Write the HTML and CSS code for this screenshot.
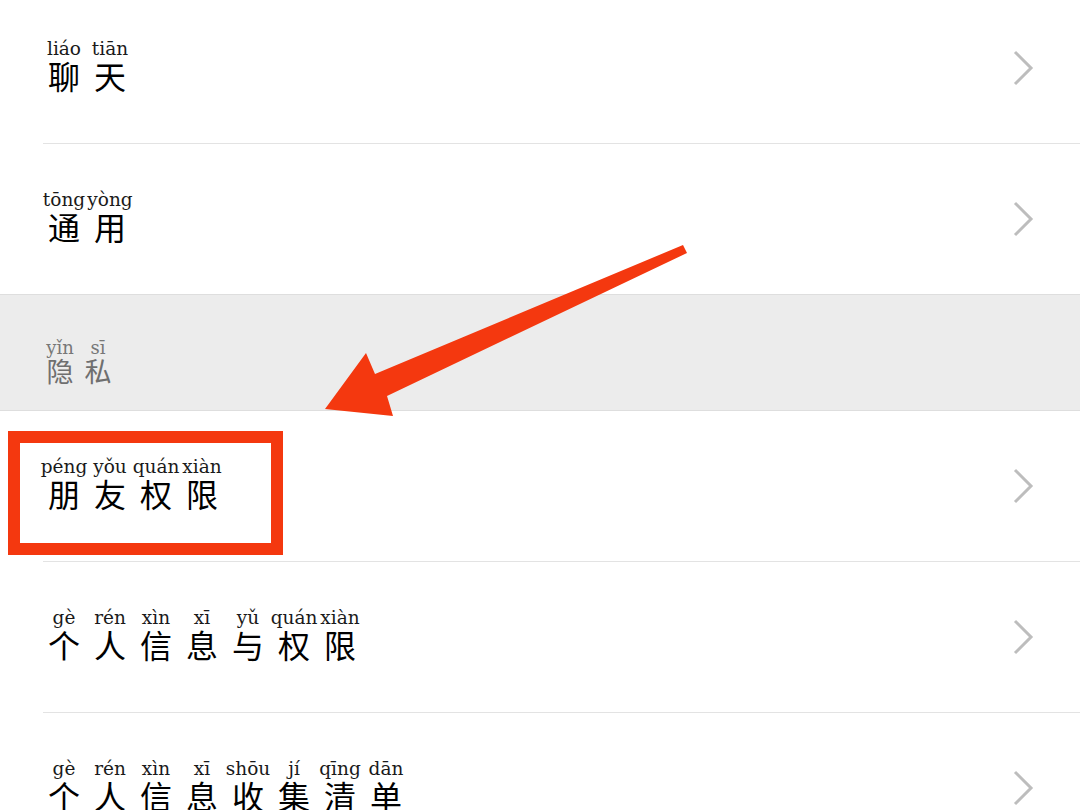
FILE: index.html
```html
<!DOCTYPE html>
<html lang="zh-CN">
<head>
<meta charset="utf-8">
<title>设置</title>
<link rel="stylesheet" href="styles.css">
</head>
<body>
<div class="page">
  <div class="list">
    <div class="row first">
      <div class="label">
        <span class="u"><span class="py">liáo</span><span class="hz">聊</span></span><span class="u"><span class="py">tiān</span><span class="hz">天</span></span>
      </div>
      <svg class="chev" viewBox="0 0 22 36" width="22" height="36"><polyline points="3,2 19,18 3,34"/></svg>
    </div>
    <div class="row before-header">
      <div class="label">
        <span class="u"><span class="py">tōng</span><span class="hz">通</span></span><span class="u"><span class="py">yòng</span><span class="hz">用</span></span>
      </div>
      <svg class="chev" viewBox="0 0 22 36" width="22" height="36"><polyline points="3,2 19,18 3,34"/></svg>
    </div>
    <div class="header">
      <div class="label">
        <span class="u"><span class="py">yǐn</span><span class="hz">隐</span></span><span class="u"><span class="py">sī</span><span class="hz">私</span></span>
      </div>
    </div>
    <div class="row">
      <div class="label">
        <span class="u"><span class="py">péng</span><span class="hz">朋</span></span><span class="u"><span class="py">yǒu</span><span class="hz">友</span></span><span class="u"><span class="py">quán</span><span class="hz">权</span></span><span class="u"><span class="py">xiàn</span><span class="hz">限</span></span>
      </div>
      <svg class="chev" viewBox="0 0 22 36" width="22" height="36"><polyline points="3,2 19,18 3,34"/></svg>
    </div>
    <div class="row">
      <div class="label">
        <span class="u"><span class="py">gè</span><span class="hz">个</span></span><span class="u"><span class="py">rén</span><span class="hz">人</span></span><span class="u"><span class="py">xìn</span><span class="hz">信</span></span><span class="u"><span class="py">xī</span><span class="hz">息</span></span><span class="u"><span class="py">yǔ</span><span class="hz">与</span></span><span class="u"><span class="py">quán</span><span class="hz">权</span></span><span class="u"><span class="py">xiàn</span><span class="hz">限</span></span>
      </div>
      <svg class="chev" viewBox="0 0 22 36" width="22" height="36"><polyline points="3,2 19,18 3,34"/></svg>
    </div>
    <div class="row">
      <div class="label">
        <span class="u"><span class="py">gè</span><span class="hz">个</span></span><span class="u"><span class="py">rén</span><span class="hz">人</span></span><span class="u"><span class="py">xìn</span><span class="hz">信</span></span><span class="u"><span class="py">xī</span><span class="hz">息</span></span><span class="u"><span class="py">shōu</span><span class="hz">收</span></span><span class="u"><span class="py">jí</span><span class="hz">集</span></span><span class="u"><span class="py">qīng</span><span class="hz">清</span></span><span class="u"><span class="py">dān</span><span class="hz">单</span></span>
      </div>
      <svg class="chev" viewBox="0 0 22 36" width="22" height="36"><polyline points="3,2 19,18 3,34"/></svg>
    </div>
  </div>

  <div class="highlight-box"></div>
  <svg class="arrow" viewBox="0 0 1080 810" width="1080" height="810">
    <polygon points="325,409 366,353 375,374 683,245 687,253 387,396 393,416"/>
  </svg>
</div>
</body>
</html>
```

FILE: styles.css
```css
html, body {
  margin: 0;
  padding: 0;
  background: #ffffff;
}
body {
  width: 1080px;
  height: 810px;
  overflow: hidden;
  font-family: "Noto Sans CJK SC", "Noto Sans", sans-serif;
}
.page {
  position: relative;
  width: 1080px;
  height: 810px;
  overflow: hidden;
}
.list {
  display: flex;
  flex-direction: column;
  margin-top: -7px;
}
.row {
  display: flex;
  align-items: center;
  justify-content: space-between;
  height: 150px;
  margin-left: 43px;
  padding-right: 46px;
  border-bottom: 1px solid #e3e3e3;
  flex-shrink: 0;
}
.row.before-header {
  border-bottom: none;
}
.row .label {
  padding-bottom: 6px;
}
.label {
  display: flex;
  margin-left: -2px;
}
.u {
  display: flex;
  flex-direction: column;
  align-items: center;
  width: 46px;
}
.py {
  font-family: "DejaVu Serif", "Liberation Serif", serif;
  font-size: 18.5px;
  line-height: 20px;
  color: #1a1a1a;
  white-space: nowrap;
}
.hz {
  font-family: "Noto Sans CJK SC", sans-serif;
  font-size: 32px;
  line-height: 32px;
  font-weight: 400;
  color: #000000;
}
.chev {
  display: block;
  fill: none;
  stroke: #bdbdbd;
  stroke-width: 3;
}
.header {
  display: flex;
  align-items: flex-start;
  height: 117px;
  padding-top: 43px;
  padding-left: 43px;
  box-sizing: border-box;
  background: #ececec;
  border-top: 1px solid #dedede;
  border-bottom: 1px solid #dedede;
  flex-shrink: 0;
}
.header .u {
  width: 38px;
}
.header .py {
  color: #777777;
  font-size: 18px;
  line-height: 19px;
}
.header .hz {
  font-size: 27px;
  line-height: 28px;
  font-weight: 400;
  color: #6f6f6f;
}
.highlight-box {
  position: absolute;
  left: 8px;
  top: 431px;
  width: 275px;
  height: 124px;
  box-sizing: border-box;
  border: 12px solid #f4380f;
}
.arrow {
  position: absolute;
  left: 0;
  top: 0;
  fill: #f4380f;
}
```
